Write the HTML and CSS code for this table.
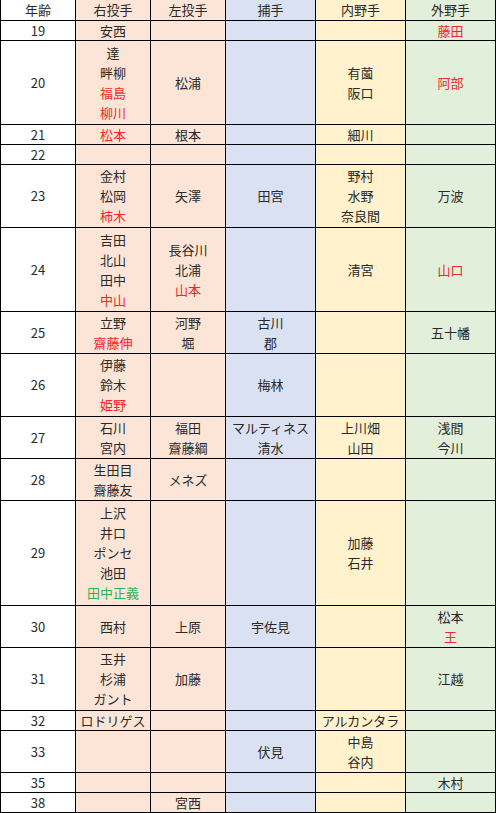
FILE: index.html
```html
<!DOCTYPE html>
<html lang="ja">
<head>
<meta charset="utf-8">
<title>年齢別選手表</title>
<link rel="stylesheet" href="styles.css">
</head>
<body>
<div class="sheet">
  <div class="row h0">
    <div class="c age">年齢</div><div class="c rp">右投手</div><div class="c lp">左投手</div><div class="c ca">捕手</div><div class="c inf">内野手</div><div class="c of">外野手</div>
  </div>
  <div class="row n1">
    <div class="c age">19</div><div class="c rp">安西</div><div class="c lp"></div><div class="c ca"></div><div class="c inf"></div><div class="c of"><span class="red">藤田</span></div>
  </div>
  <div class="row n4">
    <div class="c age">20</div>
    <div class="c rp"><span>達</span><span>畔柳</span><span class="red">福島</span><span class="red">柳川</span></div>
    <div class="c lp">松浦</div><div class="c ca"></div>
    <div class="c inf"><span>有薗</span><span>阪口</span></div>
    <div class="c of"><span class="red">阿部</span></div>
  </div>
  <div class="row n1">
    <div class="c age">21</div><div class="c rp"><span class="red">松本</span></div><div class="c lp">根本</div><div class="c ca"></div><div class="c inf">細川</div><div class="c of"></div>
  </div>
  <div class="row n1">
    <div class="c age">22</div><div class="c rp"></div><div class="c lp"></div><div class="c ca"></div><div class="c inf"></div><div class="c of"></div>
  </div>
  <div class="row n3">
    <div class="c age">23</div>
    <div class="c rp"><span>金村</span><span>松岡</span><span class="red">柿木</span></div>
    <div class="c lp">矢澤</div><div class="c ca">田宮</div>
    <div class="c inf"><span>野村</span><span>水野</span><span>奈良間</span></div>
    <div class="c of">万波</div>
  </div>
  <div class="row n4">
    <div class="c age">24</div>
    <div class="c rp"><span>吉田</span><span>北山</span><span>田中</span><span class="red">中山</span></div>
    <div class="c lp"><span>長谷川</span><span>北浦</span><span class="red">山本</span></div>
    <div class="c ca"></div><div class="c inf">清宮</div>
    <div class="c of"><span class="red">山口</span></div>
  </div>
  <div class="row n2">
    <div class="c age">25</div>
    <div class="c rp"><span>立野</span><span class="red">齋藤伸</span></div>
    <div class="c lp"><span>河野</span><span>堀</span></div>
    <div class="c ca"><span>古川</span><span>郡</span></div>
    <div class="c inf"></div><div class="c of">五十幡</div>
  </div>
  <div class="row n3">
    <div class="c age">26</div>
    <div class="c rp"><span>伊藤</span><span>鈴木</span><span class="red">姫野</span></div>
    <div class="c lp"></div><div class="c ca">梅林</div><div class="c inf"></div><div class="c of"></div>
  </div>
  <div class="row n2">
    <div class="c age">27</div>
    <div class="c rp"><span>石川</span><span>宮内</span></div>
    <div class="c lp"><span>福田</span><span>齋藤綱</span></div>
    <div class="c ca"><span>マルティネス</span><span>清水</span></div>
    <div class="c inf"><span>上川畑</span><span>山田</span></div>
    <div class="c of"><span>浅間</span><span>今川</span></div>
  </div>
  <div class="row n2">
    <div class="c age">28</div>
    <div class="c rp"><span>生田目</span><span>齋藤友</span></div>
    <div class="c lp">メネズ</div><div class="c ca"></div><div class="c inf"></div><div class="c of"></div>
  </div>
  <div class="row n5">
    <div class="c age">29</div>
    <div class="c rp"><span>上沢</span><span>井口</span><span>ポンセ</span><span>池田</span><span class="green">田中正義</span></div>
    <div class="c lp"></div><div class="c ca"></div>
    <div class="c inf"><span>加藤</span><span>石井</span></div>
    <div class="c of"></div>
  </div>
  <div class="row n2">
    <div class="c age">30</div><div class="c rp">西村</div><div class="c lp">上原</div><div class="c ca">宇佐見</div><div class="c inf"></div>
    <div class="c of"><span>松本</span><span class="red">王</span></div>
  </div>
  <div class="row n3">
    <div class="c age">31</div>
    <div class="c rp"><span>玉井</span><span>杉浦</span><span>ガント</span></div>
    <div class="c lp">加藤</div><div class="c ca"></div><div class="c inf"></div><div class="c of">江越</div>
  </div>
  <div class="row n1">
    <div class="c age">32</div><div class="c rp">ロドリゲス</div><div class="c lp"></div><div class="c ca"></div><div class="c inf">アルカンタラ</div><div class="c of"></div>
  </div>
  <div class="row n2">
    <div class="c age">33</div><div class="c rp"></div><div class="c lp"></div><div class="c ca">伏見</div>
    <div class="c inf"><span>中島</span><span>谷内</span></div>
    <div class="c of"></div>
  </div>
  <div class="row n1">
    <div class="c age">35</div><div class="c rp"></div><div class="c lp"></div><div class="c ca"></div><div class="c inf"></div><div class="c of">木村</div>
  </div>
  <div class="row n1">
    <div class="c age">38</div><div class="c rp"></div><div class="c lp">宮西</div><div class="c ca"></div><div class="c inf"></div><div class="c of"></div>
  </div>
</div>
</body>
</html>
```
FILE: styles.css
```css
html, body {
  margin: 0;
  padding: 0;
  background: #ffffff;
}

body {
  font-family: "Noto Sans CJK JP", "Noto Sans", sans-serif;
  font-size: 13px;
  color: #2a2a2a;
}

.sheet {
  width: 496px;
  box-sizing: border-box;
  display: flex;
  flex-direction: column;
  gap: 1px;
  padding: 0 1px 1px 1px;
  background: #000000;
}

.row {
  display: grid;
  grid-template-columns: 74px 74px 74px 89px 89px 89px;
  column-gap: 1px;
}

.h0 { height: 20px; }
.n1 { height: 19px; }
.n2 { height: 41px; }
.n3 { height: 62px; }
.n4 { height: 83px; }
.n5 { height: 104px; }

.c {
  display: flex;
  flex-direction: column;
  justify-content: center;
  align-items: center;
  line-height: 20px;
  white-space: nowrap;
  overflow: hidden;
}

.age { background: #ffffff; }
.rp, .lp { background: #fce4d6; }
.ca { background: #d9e1f2; }
.inf { background: #fff2cc; }
.of { background: #e2efda; }

.red { color: #f02828; }
.green { color: #2cb54e; }
```
